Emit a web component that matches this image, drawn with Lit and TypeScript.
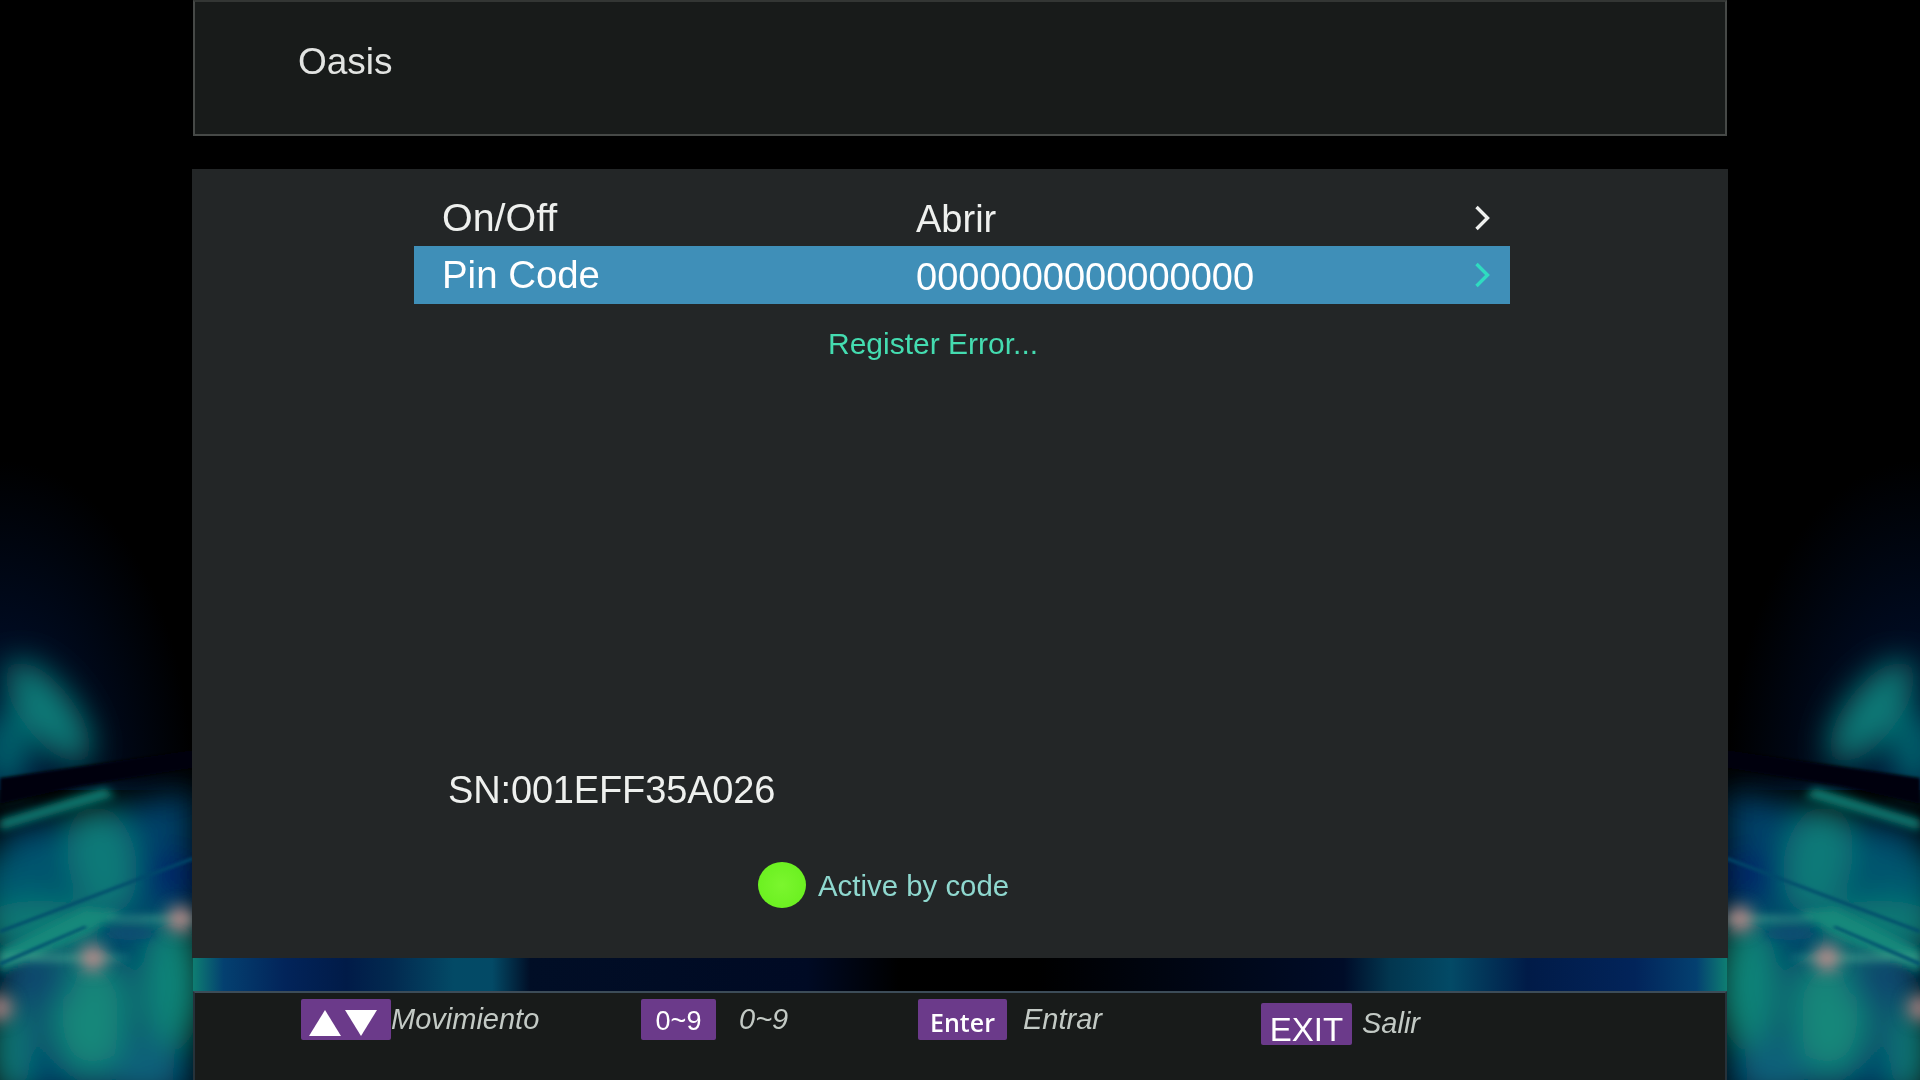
/**
 * Set-top box "Oasis" activation menu.
 *
 * Blurred backdrop drawn as SVG, three panels on top in normal flow.
 */

import { LitElement, html, css, svg } from "lit";
import { customElement } from "lit/decorators.js";

/** One side of the backdrop, drawn for the left and mirrored for the right. */
const sideGlow = svg`
  <g filter="url(#wide)">
    <ellipse cx="48" cy="712" rx="26" ry="62" fill="#0b7c78" transform="rotate(-38 48 712)" />
    <ellipse cx="6" cy="750" rx="24" ry="40" fill="#06606c" />
    <polygon points="0,830 193,790 193,1100 0,1100" fill="#053f68" />
    <polygon points="-20,860 60,840 60,930 -20,950" fill="#06566e" />
    <ellipse cx="102" cy="860" rx="34" ry="55" fill="#0a7a78" transform="rotate(-12 102 860)" />
    <ellipse cx="170" cy="875" rx="34" ry="18" fill="#02246a" />
    <ellipse cx="40" cy="925" rx="60" ry="24" fill="#0d7c74" />
    <ellipse cx="90" cy="1015" rx="38" ry="60" fill="#13887a" />
    <ellipse cx="172" cy="985" rx="30" ry="65" fill="#118478" />
    <ellipse cx="10" cy="1050" rx="20" ry="50" fill="#0e7a78" />
    <ellipse cx="35" cy="985" rx="42" ry="16" fill="#0a4a70" />
    <ellipse cx="145" cy="1070" rx="30" ry="30" fill="#09607a" />
  </g>
  <g filter="url(#soft)">
    <polygon points="0,820 105,788 115,796 0,830" fill="#0f8278" />
    <polygon points="0,950 85,908 120,912 90,932 0,972" fill="#12887a" />
    <ellipse cx="130" cy="934" rx="26" ry="6" fill="#0a4f72" />
    <ellipse cx="60" cy="958" rx="70" ry="2" fill="#4aa892" />
    <ellipse cx="150" cy="919" rx="45" ry="2" fill="#4aa892" />
  </g>
  <g filter="url(#tight)">
    <polygon points="0,778 193,750 193,768 80,786 0,804" fill="#000008" />
    <polygon points="0,930 193,857 193,860 0,933" fill="#04486a" />
    <polygon points="0,962 84,926 88,927 0,966" fill="#06506e" />
  </g>
  <g filter="url(#glow)">
    <circle cx="180" cy="919" r="13" fill="#d08c8c" opacity="0.85" />
    <circle cx="93" cy="958" r="13" fill="#d08c8c" opacity="0.85" />
    <circle cx="0" cy="1008" r="13" fill="#c08c8c" opacity="0.8" />
  </g>
`;

const backdrop = html`
  <svg class="backdrop" viewBox="0 0 1920 1080" aria-hidden="true">
    <defs>
      <filter id="wide" x="-20%" y="-20%" width="140%" height="140%">
        <feGaussianBlur stdDeviation="16" />
      </filter>
      <filter id="soft" x="-20%" y="-20%" width="140%" height="140%">
        <feGaussianBlur stdDeviation="4" />
      </filter>
      <filter id="glow" x="-20%" y="-50%" width="140%" height="200%">
        <feGaussianBlur stdDeviation="8" />
      </filter>
      <filter id="tight" x="-5%" y="-50%" width="110%" height="200%">
        <feGaussianBlur stdDeviation="1.4" />
      </filter>
      <linearGradient id="strip" x1="0" x2="1" y1="0" y2="0">
        <stop offset="0" stop-color="#0e7e72" />
        <stop offset="0.02" stop-color="#044070" />
        <stop offset="0.06" stop-color="#02245a" />
        <stop offset="0.1" stop-color="#011b48" />
        <stop offset="0.13" stop-color="#022a50" />
        <stop offset="0.17" stop-color="#034a66" />
        <stop offset="0.195" stop-color="#034a66" />
        <stop offset="0.22" stop-color="#010e26" />
        <stop offset="0.4" stop-color="#000a24" />
        <stop offset="0.46" stop-color="#000" />
        <stop offset="0.55" stop-color="#000" />
        <stop offset="0.75" stop-color="#000c28" />
        <stop offset="0.78" stop-color="#02364f" />
        <stop offset="0.82" stop-color="#034a66" />
        <stop offset="0.87" stop-color="#011b48" />
        <stop offset="0.94" stop-color="#02245a" />
        <stop offset="0.98" stop-color="#044070" />
        <stop offset="1" stop-color="#0e7e72" />
      </linearGradient>
      <radialGradient id="night" cx="0" cy="1" r="1">
        <stop offset="0" stop-color="#00143c" />
        <stop offset="1" stop-color="#000" />
      </radialGradient>
    </defs>
    <rect width="1920" height="1080" fill="#000" />
    <rect x="0" y="460" width="193" height="330" fill="url(#night)" />
    <rect x="0" y="460" width="193" height="330" fill="url(#night)" transform="translate(1920 0) scale(-1 1)" />
    ${sideGlow}
    <g transform="translate(1920 0) scale(-1 1)">${sideGlow}</g>
    <rect x="193" y="955" width="1534" height="40" fill="url(#strip)" />
  </svg>
`;

const chevron = (color: string) => html`
  <svg class="chevron" viewBox="0 0 16 26" aria-hidden="true">
    <path d="M2.5 2 L13.5 13 L2.5 24" fill="none" stroke=${color} stroke-width="3.4" />
  </svg>
`;

const arrowKeys = html`
  <svg class="arrows" viewBox="0 0 90 41" aria-hidden="true">
    <polygon points="24,11 40,37 8,37" fill="#fff" />
    <polygon points="44,11 76,11 60,37" fill="#fff" />
  </svg>
`;

@customElement("app-root")
export class AppRoot extends LitElement {
  static styles = css`
    :host {
      display: block;
      position: relative;
      width: 1920px;
      height: 1080px;
      overflow: hidden;
      background: #000;
      font-family: "Liberation Sans", Arial, sans-serif;
    }

    .backdrop {
      position: absolute;
      inset: 0;
      width: 1920px;
      height: 1080px;
    }

    .frame {
      position: relative;
      display: flex;
      flex-direction: column;
      width: 1534px;
      height: 1080px;
      margin-left: 193px;
    }

    .title-bar {
      box-sizing: border-box;
      height: 136px;
      padding: 38px 0 0 103px;
      background: #181b1a;
      border: 2px solid #464947;
      border-top-color: #333634;
      font-size: 37px;
      line-height: 44px;
      color: #e2e4e2;
      filter: blur(0.4px);
    }

    .main {
      box-sizing: border-box;
      height: 789px;
      margin: 33px -1px 0 -1px;
      padding-top: 20px;
      background: #232627;
      color: #eef0ee;
    }

    .row {
      display: grid;
      grid-template-columns: 474px 558px 16px;
      align-items: center;
      height: 57px;
      margin-left: 222px;
      width: 1096px;
      padding-left: 28px;
      box-sizing: border-box;
      font-size: 38px;
      filter: blur(0.4px);
    }

    .row .label {
      font-size: 39.4px;
    }

    .row .value {
      position: relative;
      top: 2px;
    }

    .row.active {
      height: 58px;
      background: #3f8fb8;
      color: #fff;
    }

    .row.active .label {
      font-size: 38.4px;
    }

    .chevron {
      display: block;
      width: 16px;
      height: 26px;
    }

    .message {
      margin-top: 22px;
      padding-left: 636px;
      font-size: 30px;
      line-height: 36px;
      color: #44dcb0;
      filter: blur(0.4px);
    }

    .serial {
      margin-top: 406px;
      padding-left: 256px;
      font-size: 38px;
      letter-spacing: -0.15px;
      line-height: 44px;
      filter: blur(0.4px);
    }

    .status {
      display: flex;
      align-items: center;
      gap: 12px;
      margin-top: 50px;
      padding-left: 566px;
      font-size: 29.4px;
      color: #8fd8cf;
    }

    .status span:last-child {
      position: relative;
      top: 1px;
      filter: blur(0.4px);
    }

    .dot {
      width: 48px;
      height: 46px;
      border-radius: 50%;
      background: radial-gradient(circle, #7bf62e 0%, #66ee1c 100%);
    }

    .footer {
      box-sizing: border-box;
      flex: 1;
      display: flex;
      margin-top: 33px;
      padding: 6px 0 0 106px;
      background: #181b1a;
      border-top: 2px solid #3c4c58;
      border-left: 2px solid #26323a;
      border-right: 2px solid #26323a;
      color: #c3cac5;
      font-size: 29px;
      font-style: italic;
    }

    .hint {
      display: flex;
      align-items: flex-start;
      height: 41px;
      line-height: 41px;
      flex: none;
      filter: blur(0.4px);
    }

    .hint.move {
      width: 340px;
    }
    .hint.digits {
      width: 277px;
    }
    .hint.enter {
      width: 343px;
    }

    .key {
      flex: none;
      height: 41px;
      border-radius: 2px;
      background: #6b3a8a;
      color: #fff;
      font-style: normal;
      font-size: 27px;
      text-align: center;
    }

    .digits .key {
      width: 75px;
      margin-right: 23px;
      line-height: 45px;
    }

    .enter .key {
      width: 89px;
      margin-right: 16px;
      font-family: "Open Sans", sans-serif;
      font-size: 25px;
      font-weight: 600;
      line-height: 47px;
    }

    .exit {
      padding-top: 4px;
    }

    .exit .key {
      width: 91px;
      height: 42px;
      margin-right: 10px;
      font-size: 33px;
      line-height: 54px;
    }

    .arrows {
      display: block;
      width: 90px;
      height: 41px;
    }
  `;

  render() {
    return html`
      ${backdrop}
      <div class="frame">
        <div class="title-bar">Oasis</div>
        <div class="main">
          <div class="row">
            <span class="label">On/Off</span>
            <span class="value">Abrir</span>
            ${chevron("#eef0ee")}
          </div>
          <div class="row active">
            <span class="label">Pin Code</span>
            <span class="value">0000000000000000</span>
            ${chevron("#2fdcc0")}
          </div>
          <div class="message">Register Error...</div>
          <div class="serial">SN:001EFF35A026</div>
          <div class="status">
            <span class="dot"></span>
            <span>Active by code</span>
          </div>
        </div>
        <div class="footer">
          <div class="hint move">
            <span class="key">${arrowKeys}</span>
            <span>Movimiento</span>
          </div>
          <div class="hint digits">
            <span class="key">0~9</span>
            <span>0~9</span>
          </div>
          <div class="hint enter">
            <span class="key">Enter</span>
            <span>Entrar</span>
          </div>
          <div class="hint exit">
            <span class="key">EXIT</span>
            <span>Salir</span>
          </div>
        </div>
      </div>
    `;
  }
}

declare global {
  interface HTMLElementTagNameMap {
    "app-root": AppRoot;
  }
}
